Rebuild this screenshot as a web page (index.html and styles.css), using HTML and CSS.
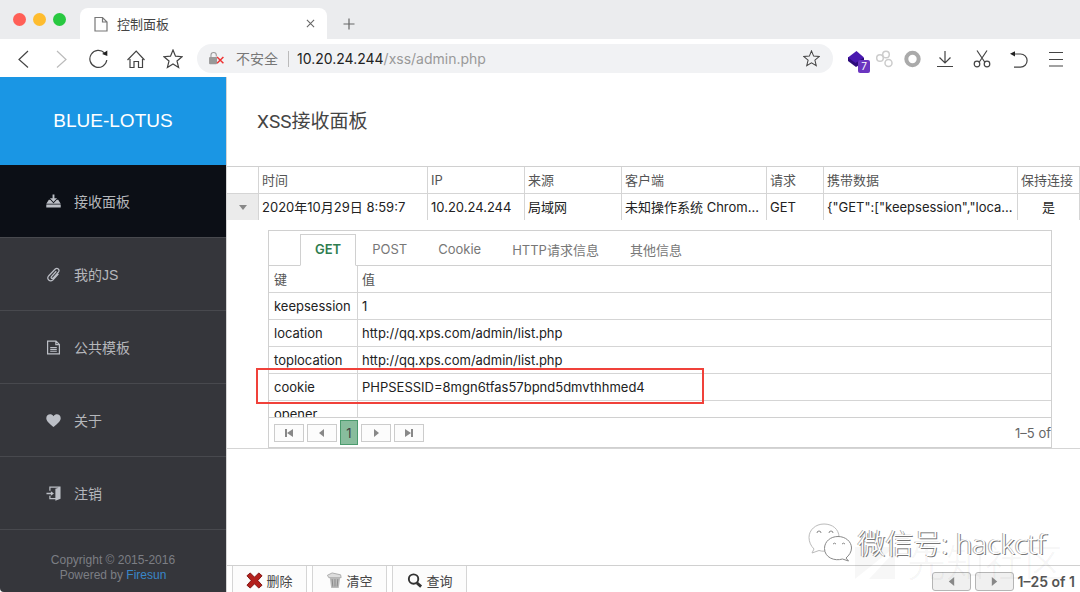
FILE: index.html
```html
<!DOCTYPE html>
<html lang="zh-CN">

<head>
    <meta charset="UTF-8">
    <meta name="viewport" content="width=device-width, initial-scale=1.0">
    <title>控制面板</title>
    <link rel="stylesheet" href="styles.css">
</head>

<body>
    <!-- Browser window -->
    <div class="tab-strip">
        <div class="lights">
            <span class="light light-red"></span>
            <span class="light light-yellow"></span>
            <span class="light light-green"></span>
        </div>
        <div class="browser-tab">
            <svg class="tab-icon" viewBox="0 0 14 16"><path d="M1 1.500h7.500l4.500 4.500v9H1zM8.500 1.500V6H13"/></svg>
            <span class="tab-title">控制面板</span>
            <button class="icon-btn tab-close" aria-label="关闭">
                <svg viewBox="0 0 10 10" width="9" height="9"><path d="M1 1l8 8M9 1l-8 8"/></svg>
            </button>
        </div>
        <button class="icon-btn new-tab" aria-label="新标签页">
            <svg viewBox="0 0 12 12" width="12" height="12"><path d="M6 .5v11M.5 6h11"/></svg>
        </button>
    </div>

    <div class="nav-bar">
        <button class="icon-btn nav-btn" aria-label="后退"><svg viewBox="0 0 20 20" width="20" height="20"><path d="M13 2L4 10.500l9 8"/></svg></button>
        <button class="icon-btn nav-btn disabled" aria-label="前进"><svg viewBox="0 0 20 20" width="20" height="20"><path d="M5 2l9 8.500-9 8"/></svg></button>
        <button class="icon-btn nav-btn" aria-label="刷新"><svg viewBox="0 0 20 20" width="20" height="20"><path d="M15.500 4A8.500 8.500 0 1 0 17.800 11"/><path class="solid" d="M18.300 1.500v5.500l-5.200-2z"/></svg></button>
        <button class="icon-btn nav-btn" aria-label="主页"><svg viewBox="0 0 20 20" width="20" height="20"><path d="M4 10v8.500h4v-6h4.500v6h4V10M1.500 11l8.700-9 8.300 9"/></svg></button>
        <button class="icon-btn nav-btn" aria-label="收藏夹"><svg viewBox="0 0 20 20" width="20" height="20"><path d="M10 1l2.500 6.200 6.500.5-5 4.300 1.600 6.500L10 15l-5.600 3.500L6 12 1 7.700l6.500-.5z"/></svg></button>

        <div class="omnibox">
            <svg class="lock" viewBox="0 0 16 14"><path class="shackle" d="M2.800 6V3.800a2.500 2.500 0 0 1 5 0V5"/><rect x="1" y="5.500" width="7.500" height="7" rx="1"/><path class="cross" d="M8.500 5.500l6 6M14.500 5.500l-6 6"/></svg>
            <span class="insecure">不安全</span>
            <span class="url"><b>10.20.24.244</b>/xss/admin.php</span>
            <button class="icon-btn bookmark" aria-label="添加书签"><svg viewBox="0 0 20 20" width="17" height="17"><path d="M10 1l2.500 6.200 6.500.5-5 4.300 1.600 6.500L10 15l-5.600 3.500L6 12 1 7.700l6.500-.5z"/></svg></button>
        </div>

        <button class="icon-btn ext-btn" aria-label="扩展">
            <svg viewBox="0 0 18 18" width="18" height="18"><path class="layer-dark" d="M1 7v4l8 6 8-5V8z"/><path class="layer" d="M1 7.500L9.500 1 17 7.500 8.500 13z"/></svg>
            <span class="ext-badge">7</span>
        </button>
        <button class="icon-btn ext-btn ext-grey" aria-label="扩展"><svg viewBox="0 0 18 18" width="18" height="18"><circle cx="5" cy="8" r="3.300"/><circle cx="11" cy="4.500" r="3.300"/><circle cx="13.500" cy="13" r="3.500"/></svg></button>
        <button class="icon-btn ext-btn ext-ring" aria-label="扩展"><svg viewBox="0 0 18 18" width="18" height="18"><circle cx="9.500" cy="9" r="6.200"/></svg></button>
        <button class="icon-btn nav-btn" aria-label="下载"><svg viewBox="0 0 20 20" width="20" height="20"><path d="M10 2v12M4.500 8.500L10 14l5.500-5.500M2 17.500h16"/></svg></button>
        <button class="icon-btn nav-btn" aria-label="截图"><svg viewBox="0 0 20 20" width="20" height="20"><path d="M5 1.500l8 12M15 1.500l-8 12"/><circle cx="5" cy="15" r="2.800"/><circle cx="15" cy="15" r="2.800"/></svg></button>
        <button class="icon-btn nav-btn" aria-label="撤销"><svg viewBox="0 0 20 20" width="20" height="20"><path d="M3 5h8.500a6.600 6.600 0 0 1 0 13.200H5"/><path class="solid" d="M1 4.800l5-2.600v5.200z"/></svg></button>
        <button class="icon-btn nav-btn" aria-label="菜单"><svg viewBox="0 0 20 20" width="20" height="20"><path d="M3 3.500h14M3 10.500h14M3 17h14"/></svg></button>
    </div>

    <!-- Page -->
    <div class="page">
        <aside class="sidebar">
            <h1 class="logo">BLUE-LOTUS</h1>
            <nav class="menu">
                <a class="menu-item active" href="#panel">
                    <svg viewBox="0 0 16 16"><path d="M7 .5h2v4h2.800L8 8.500l-3.800-4H7zM3 6L.3 10.300h15.400L13 6h-1.500L8 9.800 4.500 6zM.3 11.200h15.400v3.300H.3z"/></svg>
                    <span>接收面板</span>
                </a>
                <a class="menu-item" href="#myjs">
                    <svg class="outline" viewBox="0 0 16 16"><path d="M11 4.500L5.800 10.300c-1 1.300.5 2.600 1.700 1.500l5.600-6.200c2.200-2.800-1-5.600-3.500-3.200L3 9.300c-3 3.500 1.200 7.400 4.500 4.300l5.800-6.300"/></svg>
                    <span>我的JS</span>
                </a>
                <a class="menu-item" href="#template">
                    <svg class="outline" viewBox="0 0 16 16"><path d="M1.700 1.200h9l3.600 3.600v10H1.700zM10.500 1.200V5h3.800M4.500 8h7M4.500 10h7M4.500 12h7"/></svg>
                    <span>公共模板</span>
                </a>
                <a class="menu-item" href="#about">
                    <svg viewBox="0 0 16 16"><path d="M8 15C5.500 12.500.3 9 .3 5.500.3 1.500 5.500-.2 8 3.500c2.500-3.700 7.700-2 7.700 2C15.700 9 10.500 12.500 8 15z"/></svg>
                    <span>关于</span>
                </a>
                <a class="menu-item" href="#logout">
                    <svg viewBox="0 0 16 16"><path d="M3.500.5h12v13L10 15.700V14H3.500v-3.500h1.300v2.200H10V3l3.500-1.200H4.800V5H3.500zM.5 7.200h4.700V5.500L8.500 8l-3.300 2.500V8.800H.5z"/></svg>
                    <span>注销</span>
                </a>
            </nav>
            <footer class="copyright">
                Copyright © 2015-2016<br>
                Powered by <a href="#firesun">Firesun</a>
            </footer>
        </aside>

        <main class="content">
            <h2 class="panel-title">XSS接收面板</h2>

            <div class="grid">
                <table class="grid-table">
                    <colgroup>
                        <col class="col-toggle">
                        <col class="col-time">
                        <col class="col-ip">
                        <col class="col-ip">
                        <col>
                        <col class="col-method">
                        <col class="col-data">
                        <col class="col-keep">
                    </colgroup>
                    <thead>
                        <tr>
                            <th></th>
                            <th>时间</th>
                            <th>IP</th>
                            <th>来源</th>
                            <th>客户端</th>
                            <th>请求</th>
                            <th>携带数据</th>
                            <th>保持连接</th>
                        </tr>
                    </thead>
                    <tbody>
                        <tr>
                            <td class="toggle"><button class="icon-btn" aria-label="收起"><svg viewBox="0 0 8 5" width="8" height="5"><path class="solid" d="M0 0h8L4 5z"/></svg></button></td>
                            <td>2020年10月29日 8:59:7</td>
                            <td>10.20.24.244</td>
                            <td>局域网</td>
                            <td>未知操作系统 Chrom...</td>
                            <td>GET</td>
                            <td>{"GET":["keepsession","loca...</td>
                            <td class="center">是</td>
                        </tr>
                    </tbody>
                </table>

                <div class="detail">
                    <div class="detail-box">
                        <div class="tabs" role="tablist">
                            <button class="tab selected" role="tab">GET</button>
                            <button class="tab" role="tab">POST</button>
                            <button class="tab" role="tab">Cookie</button>
                            <button class="tab" role="tab">HTTP请求信息</button>
                            <button class="tab" role="tab">其他信息</button>
                        </div>
                        <div class="rows">
                            <table class="grid-table kv-table">
                                <colgroup>
                                    <col class="col-key">
                                    <col>
                                </colgroup>
                                <thead>
                                    <tr><th>键</th><th>值</th></tr>
                                </thead>
                                <tbody>
                                    <tr><td>keepsession</td><td>1</td></tr>
                                    <tr><td>location</td><td>http://qq.xps.com/admin/list.php</td></tr>
                                    <tr><td>toplocation</td><td>http://qq.xps.com/admin/list.php</td></tr>
                                    <tr><td>cookie</td><td>PHPSESSID=8mgn6tfas57bpnd5dmvthhmed4</td></tr>
                                    <tr><td>opener</td><td></td></tr>
                                </tbody>
                            </table>
                        </div>
                        <div class="pager">
                            <button class="page-btn" aria-label="首页"><svg viewBox="0 0 10 8" width="10" height="8"><path d="M1 0h2v8H1zM9 0v8L3 4z"/></svg></button>
                            <button class="page-btn" aria-label="上一页"><svg viewBox="0 0 10 8" width="10" height="8"><path d="M7 0v8L2 4z"/></svg></button>
                            <button class="page-btn current">1</button>
                            <button class="page-btn" aria-label="下一页"><svg viewBox="0 0 10 8" width="10" height="8"><path d="M3 0l5 4-5 4z"/></svg></button>
                            <button class="page-btn" aria-label="末页"><svg viewBox="0 0 10 8" width="10" height="8"><path d="M1 0l6 4-6 4zM7 0h2v8H7z"/></svg></button>
                            <span class="pager-info">1–5 of</span>
                        </div>
                        <div class="highlight"></div>
                    </div>
                </div>
            </div>

            <div class="status-bar">
                <button class="tool-btn">
                    <svg viewBox="0 0 18 18"><path class="delete" d="M1 4l3.500-3L9 5.500 13.500 1 17 4l-4.500 5 4.500 5-3.500 3L9 12.500 4.500 17 1 14l4.500-5z"/></svg>
                    删除
                </button>
                <button class="tool-btn">
                    <svg viewBox="0 0 18 18"><path class="bin" d="M4 6h11l-1.500 11h-8z"/><path class="bin-lid" d="M1.500 3.500l5-2.500 9 2 .5 3H3z"/><path class="bin-line" d="M6.500 7.500l.7 8M9.500 7.500v8M12.500 7.500l-.7 8"/></svg>
                    清空
                </button>
                <button class="tool-btn">
                    <svg viewBox="0 0 18 18"><circle class="lens" cx="8" cy="7.500" r="5"/><path class="handle" d="M11.500 11.500l4.500 4"/></svg>
                    查询
                </button>
                <div class="status-pager">
                    <button class="round-btn" aria-label="上一页"><svg viewBox="0 0 10 10" width="9" height="9"><path d="M8 0v10L2 5z"/></svg></button>
                    <button class="round-btn" aria-label="下一页"><svg viewBox="0 0 10 10" width="9" height="9"><path d="M2 0l6 5-6 5z"/></svg></button>
                    <span>1–25 of 1</span>
                </div>
            </div>
        </main>
    </div>

    <!-- Watermarks -->
    <div class="community-mark">
        <svg viewBox="0 0 44 36" width="44" height="36"><path d="M2 2h40L2 34zM42 6v28H16z"/></svg>
        <span>先知社区</span>
    </div>
    <div class="wechat-mark">
        <svg viewBox="0 0 46 42" width="46" height="42">
            <path d="M7 27l-2 4 7-2.500c2 .6 3.500.8 5.500.7 8 0 14.500-6 14.500-14S25.500 2 17 2 2 8 2 15.500C2 20 4 24 7 27z"/>
            <path class="front" d="M39 36l2.500 3-6-2c-8 2.500-18-1.500-18-10.500 0-7 6-12 13.500-12s13.500 5 13.500 11.500c0 4-2.500 7.500-5.500 10z"/>
            <path class="eye" d="M10 11a2 2 0 0 1 4 0M22 11a2 2 0 0 1 4 0M26 22a2 2 0 0 1 3 0M35 22a2 2 0 0 1 3 0"/>
        </svg>
        <span>微信号: hackctf</span>
    </div>
</body>

</html>
```

FILE: styles.css
```css
* {
    box-sizing: border-box;
}

body {
    margin: 0;
    height: 100vh;
    display: flex;
    flex-direction: column;
    overflow: hidden;
    position: relative;
    font-family: Inter, "Noto Sans CJK SC", sans-serif;
    font-size: 13px;
    color: #222;
    background-color: white;
}

button {
    font: inherit;
    color: inherit;
    padding: 0;
    cursor: pointer;
}

a {
    text-decoration: none;
}

svg {
    display: block;
    flex: none;
}

.icon-btn {
    display: flex;
    align-items: center;
    justify-content: center;
    border: none;
    background: none;
}

.icon-btn svg {
    fill: none;
    stroke: #444;
    stroke-width: 1.2;
}

.icon-btn .solid {
    fill: #222;
    stroke: none;
}

/* Browser window */
.tab-strip {
    display: flex;
    align-items: center;
    flex: none;
    height: 39px;
    padding-left: 13px;
    background-color: #ebecee;
}

.lights {
    display: flex;
    gap: 7px;
    margin-right: 14px;
}

.light {
    width: 13px;
    height: 13px;
    border-radius: 50%;
}

.light-red {
    background-color: #ff5f57;
}

.light-yellow {
    background-color: #febc2e;
}

.light-green {
    background-color: #28c840;
}

.browser-tab {
    display: flex;
    align-items: center;
    align-self: flex-end;
    width: 247px;
    height: 31px;
    padding: 0 12px 0 14px;
    border-radius: 8px 8px 0 0;
    background-color: white;
}

.tab-icon {
    width: 14px;
    height: 16px;
    fill: none;
    stroke: #777;
    stroke-width: 1.2;
}

.tab-title {
    flex: 1;
    margin-left: 9px;
    color: #444;
}

.tab-close svg,
.new-tab svg {
    stroke: #666;
}

.new-tab {
    margin-left: 16px;
    margin-top: 8px;
}

.nav-bar {
    display: flex;
    align-items: center;
    flex: none;
    height: 38px;
    padding: 1px 6px 0;
}

.nav-btn {
    width: 37px;
    height: 30px;
}

.disabled svg {
    stroke: #bbb;
}

.omnibox {
    display: flex;
    align-items: center;
    flex: 1;
    height: 29px;
    margin: 0 9px 0 6px;
    padding: 0 13px 0 11px;
    border-radius: 15px;
    background-color: #f1f2f4;
    font-size: 14px;
}

.lock {
    width: 17px;
    height: 15px;
    fill: #999;
}

.lock .shackle {
    fill: none;
    stroke: #999;
}

.lock .cross {
    fill: none;
    stroke: #e33;
    stroke-width: 1.4;
}

.insecure {
    margin-left: 11px;
    padding-right: 10px;
    border-right: 1px solid #bbb;
    line-height: 16px;
    color: #777;
}

.url {
    flex: 1;
    margin-left: 8px;
    color: #999;
}

.url b {
    font-weight: 400;
    color: #222;
}

.ext-btn {
    position: relative;
    width: 28px;
    height: 30px;
}

.ext-btn .layer {
    fill: #4a19b0;
    stroke: none;
}

.ext-btn .layer-dark {
    fill: #2c0b7a;
    stroke: none;
}

.ext-badge {
    position: absolute;
    right: 0;
    bottom: 1px;
    width: 12px;
    height: 13px;
    border-radius: 2px;
    background-color: #6b35c0;
    color: white;
    font-size: 10px;
    line-height: 13px;
}

.ext-grey svg {
    stroke: #ccc;
    stroke-width: 1.5;
}

.ext-ring svg {
    stroke: #aaa;
    stroke-width: 4;
}

/* Sidebar */
.page {
    display: flex;
    flex: 1;
    min-height: 0;
}

.sidebar {
    display: flex;
    flex-direction: column;
    flex: none;
    width: 226px;
    background-color: #35363b;
    border-radius: 0 0 0 4px;
}

.logo {
    margin: 0;
    font-family: "Liberation Sans", sans-serif;
    font-size: 19px;
    font-weight: 400;
    line-height: 88px;
    text-align: center;
    color: white;
    background-color: #1a96e4;
}

.menu-item {
    display: flex;
    align-items: center;
    gap: 13px;
    height: 73px;
    padding-left: 46px;
    border-bottom: 1px solid #48494e;
    font-family: "Liberation Sans", "Noto Sans CJK SC", sans-serif;
    font-size: 14px;
    color: #b5b7bb;
}

.menu-item.active {
    background-color: #0c0f16;
}

.menu-item svg {
    width: 15px;
    height: 15px;
    fill: #bcbfc6;
}

.menu-item .outline {
    fill: none;
    stroke: #bcbfc6;
    stroke-width: 1.3;
}

.copyright {
    padding-top: 23px;
    font-family: "Liberation Sans", sans-serif;
    font-size: 12px;
    line-height: 15px;
    text-align: center;
    color: #7c7e84;
}

.copyright a {
    color: #3a87c8;
}

/* Content */
.content {
    display: flex;
    flex-direction: column;
    flex: 1;
    min-width: 0;
    border-left: 1px solid #d5d5d5;
}

.panel-title {
    margin: 0;
    padding-left: 30px;
    font-family: Roboto, "Noto Sans CJK SC", sans-serif;
    font-size: 19px;
    font-weight: 400;
    line-height: 89px;
    color: #444;
}

.grid {
    flex: 1;
    min-height: 0;
    border-top: 1px solid #d0d0d0;
}

.grid-table {
    width: 100%;
    table-layout: fixed;
    border-collapse: separate;
    border-spacing: 0;
}

.grid-table th,
.grid-table td {
    height: 26px;
    padding: 0 3px;
    border-right: 1px solid #d5d5d5;
    font-weight: 400;
    line-height: 26px;
    text-align: left;
    white-space: nowrap;
    overflow: hidden;
    text-overflow: ellipsis;
}

.grid-table th {
    height: 27px;
    border-bottom: 1px solid #d5d5d5;
    color: #555;
}

.grid-table th:last-child {
    padding-right: 0;
}

.col-toggle {
    width: 32px;
}

.col-time {
    width: 169px;
}

.col-ip {
    width: 97px;
}

.col-method {
    width: 57px;
}

.col-data {
    width: 194px;
}

.col-keep {
    width: 62px;
}

.grid-table .toggle {
    background-color: #ebebeb;
}

.toggle .icon-btn {
    width: 100%;
    height: 26px;
}

.toggle .solid {
    fill: #888;
}

.grid-table .center {
    padding: 0;
    text-align: center;
}

.detail {
    padding: 10px 28px 0 41px;
    border-bottom: 1px solid #d5d5d5;
}

.detail-box {
    position: relative;
    border: 1px solid #d0d0d0;
}

.tabs {
    display: flex;
    gap: 1px;
    height: 35px;
    padding: 3px 0 0 31px;
    border-bottom: 1px solid #d0d0d0;
}

.tab {
    height: 32px;
    padding: 0 14px 2px;
    border: 1px solid transparent;
    background: none;
    color: #777;
}

.tab.selected {
    border-color: #d0d0d0;
    border-bottom-color: white;
    background-color: white;
    font-weight: 600;
    color: #2e7d4f;
}

.rows {
    height: 152px;
    overflow: hidden;
    border-bottom: 1px solid #d0d0d0;
}

.kv-table th,
.kv-table td {
    height: 27px;
    padding-left: 5px;
    border-bottom: 1px solid #d5d5d5;
}

.kv-table th:last-child,
.kv-table td:last-child {
    padding-left: 4px;
    border-right: none;
}

.col-key {
    width: 89px;
}

.pager {
    display: flex;
    align-items: center;
    gap: 3px;
    height: 29px;
    padding-left: 5px;
}

.page-btn {
    display: flex;
    align-items: center;
    justify-content: center;
    width: 30px;
    height: 18px;
    border: 1px solid #ccc;
    background-color: #fcfcfc;
}

.page-btn svg,
.round-btn svg {
    fill: #888;
}

.page-btn.current {
    width: 18px;
    height: 25px;
    border-color: #4b9b6e;
    background-color: #88bd9d;
    color: #444;
}

.pager-info {
    margin-left: auto;
    color: #666;
}

.highlight {
    position: absolute;
    top: 137px;
    left: -13px;
    width: 448px;
    height: 36px;
    border: 2px solid #f0413a;
}

.status-bar {
    display: flex;
    gap: 5px;
    flex: none;
    height: 27px;
    padding: 0 5px;
    border-top: 1px solid #d0d0d0;
    overflow: hidden;
}

.tool-btn {
    display: flex;
    align-items: center;
    justify-content: center;
    gap: 3px;
    width: 75px;
    height: 30px;
    border: 1px solid #d5d5d5;
    border-top: none;
    background-color: #fcfcfc;
    color: #444;
}

.tool-btn svg {
    width: 17px;
    height: 17px;
}

.delete {
    fill: #b3201c;
    stroke: #7e1210;
}

.bin {
    fill: #bbb;
}

.bin-lid {
    fill: #ddd;
    stroke: #aaa;
}

.bin-line {
    fill: none;
    stroke: #888;
}

.lens {
    fill: none;
    stroke: #333;
    stroke-width: 2;
}

.handle {
    stroke: #333;
    stroke-width: 3;
}

.status-pager {
    display: flex;
    align-items: center;
    gap: 4px;
    height: 30px;
    margin-left: auto;
    font-size: 14px;
    font-weight: 600;
    color: #555;
}

.round-btn {
    display: flex;
    align-items: center;
    justify-content: center;
    width: 39px;
    height: 19px;
    border: 1px solid #b5b5b5;
    border-radius: 3px;
    background-color: #f0f0f0;
}

/* Watermarks */
.community-mark {
    position: absolute;
    right: 17px;
    bottom: 6px;
    display: flex;
    align-items: center;
    gap: 10px;
    font-size: 39px;
    line-height: 46px;
    color: rgba(0, 0, 0, 0.03);
    pointer-events: none;
}

.community-mark svg {
    fill: rgba(0, 0, 0, 0.03);
}

.wechat-mark {
    position: absolute;
    right: 34px;
    bottom: 28px;
    display: flex;
    align-items: center;
    gap: 5px;
    font-family: "Noto Sans", "Noto Sans CJK SC", sans-serif;
    font-size: 28px;
    font-weight: 300;
    line-height: 40px;
    color: white;
    text-shadow: 1px 1px 0 #777, -1px 0 0 #aaa;
    pointer-events: none;
}

.wechat-mark svg {
    fill: white;
    stroke: #bbb;
}

.wechat-mark .front {
    stroke: #888;
}

.wechat-mark .eye {
    fill: none;
    stroke: #888;
}
```
